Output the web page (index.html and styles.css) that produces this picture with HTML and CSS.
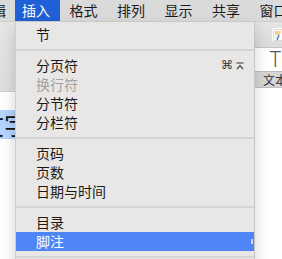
FILE: index.html
```html
<!DOCTYPE html>
<html lang="zh">
<head>
<meta charset="utf-8">
<link rel="stylesheet" href="styles.css">
</head>
<body>
<div class="screen">
  <div class="menubar">
    <div class="mb-item mb-first">编辑</div>
    <div class="mb-item mb-active">插入</div>
    <div class="mb-item">格式</div>
    <div class="mb-item">排列</div>
    <div class="mb-item">显示</div>
    <div class="mb-item">共享</div>
    <div class="mb-item">窗口</div>
  </div>
  <div class="window">
    <div class="doc">
      <div class="doc-toolbar"></div>
      <div class="doc-body">
        <span class="sel">插入文字</span>
      </div>
    </div>
    <div class="sidebar">
      <div class="sb-toolbar">
        <div class="sb-icon">
          <svg width="10" height="12" viewBox="0 0 10 12">
            <rect x="0.5" y="0.5" width="9" height="11" fill="#fff" stroke="#d8d8d8"/>
            <path d="M2 3h6M2 5h5" stroke="#f0a030" stroke-width="1.2"/>
            <path d="M6 6l-2 5" stroke="#3a7fe0" stroke-width="1.4"/>
            <path d="M2 8h2" stroke="#f6c040" stroke-width="1.2"/>
          </svg>
        </div>
      </div>
      <div class="sb-format">T</div>
      <div class="sb-tabs"><span class="sb-tab">文本</span></div>
      <div class="sb-body"></div>
    </div>
  </div>

  <div class="dropdown">
    <div class="mi">节</div>
    <div class="sep"></div>
    <div class="mi">分页符<span class="sc">⌘<svg class="enter" width="8" height="8" viewBox="0 0 8 8"><path d="M0.5 1h7M1 7.2L4 3.6L7 7.2" fill="none" stroke="#333" stroke-width="1.1"/></svg></span></div>
    <div class="mi mi-off">换行符</div>
    <div class="mi">分节符</div>
    <div class="mi">分栏符</div>
    <div class="sep"></div>
    <div class="mi">页码</div>
    <div class="mi">页数</div>
    <div class="mi">日期与时间</div>
    <div class="sep"></div>
    <div class="mi">目录</div>
    <div class="mi mi-hl">脚注<span class="arrow"></span></div>
    <div class="sep"></div>
    <div class="mi">批注</div>
  </div>
</div>
</body>
</html>
```
FILE: styles.css
```css
* { box-sizing: border-box; }
html, body { margin: 0; padding: 0; }
body {
  width: 282px;
  height: 259px;
  overflow: hidden;
  background: #fff;
  font-family: "Noto Sans CJK SC", "Noto Sans", sans-serif;
  color: #222;
}
.screen {
  position: relative;
  width: 282px;
  height: 259px;
  overflow: hidden;
}
.menubar {
  display: flex;
  gap: 2px;
  height: 22px;
  background: #dbdada;
  border-bottom: 1px solid #cfcfcf;
  font-size: 14px;
  line-height: 21px;
  white-space: nowrap;
}
.mb-item {
  padding: 0 10px 0 7.5px;
  color: #1a1a1a;
  flex: none;
}
.mb-first {
  margin-left: -22px;
  padding: 0 6.5px 0 0;
}
.mb-active {
  background: #1f60d6;
  color: #fff;
}
.window {
  display: flex;
  height: 237px;
}
.doc {
  flex: 1;
  display: flex;
  flex-direction: column;
}
.doc-toolbar {
  height: 70px;
  background: linear-gradient(#e6e6e6, #dedede);
  border-bottom: 1px solid #d0d0d0;
}
.doc-body {
  flex: 1;
  background: #fff;
  padding-top: 18px;
  padding-left: 0;
  font-size: 25px;
  line-height: 29px;
  overflow: hidden;
  white-space: nowrap;
}
.sel {
  display: inline-block;
  margin-left: -71px;
  background: #b4d5fe;
  color: #111;
}
.sidebar {
  width: 40px;
  display: flex;
  flex-direction: column;
  border-left: 1px solid #c8c8c8;
}
.sb-toolbar {
  height: 26px;
  background: linear-gradient(#e4e4e4, #dcdcdc);
  border-bottom: 1px solid #c4c4c4;
  display: flex;
  justify-content: flex-end;
  padding-top: 6px;
}
.sb-icon {
  width: 12px;
  height: 13px;
  background: #fff;
  margin-right: -2px;
  display: flex;
  align-items: center;
  justify-content: center;
}
.sb-format {
  height: 23px;
  background: #fff;
  text-align: right;
  padding-right: 1px;
  font-family: "Noto Sans", sans-serif;
  font-weight: 300;
  font-size: 21px;
  line-height: 23px;
  color: #555;
  overflow: hidden;
}
.sb-tabs {
  height: 17px;
  background: #d6d6d6;
  border-top: 1px solid #bdbdbd;
  border-bottom: 1px solid #bdbdbd;
  font-size: 12px;
  line-height: 15px;
  text-align: right;
  color: #333;
  white-space: nowrap;
  overflow: hidden;
}
.sb-tab { margin-right: -5px; }
.sb-body { flex: 1; background: #fff; }

.dropdown {
  position: absolute;
  left: 15px;
  top: 22px;
  width: 240px;
  padding-top: 3px;
  background: #e8e7e5;
  border-left: 1px solid #cfcfcf;
  border-right: 1px solid #c6c6c6;
  box-shadow: 0 6px 14px rgba(0, 0, 0, 0.18);
  font-size: 14px;
}
.mi {
  position: relative;
  height: 19px;
  line-height: 19px;
  padding-left: 20px;
  color: #1a1a1a;
  white-space: nowrap;
}
.mi-off { color: #a3a3a3; }
.mi-hl {
  background: #4f86f7;
  color: #fff;
}
.sc {
  position: absolute;
  right: 10px;
  top: 0;
  display: flex;
  align-items: center;
  gap: 3px;
  height: 19px;
  font-family: "DejaVu Sans", sans-serif;
  font-size: 12px;
  color: #333;
}
.arrow {
  position: absolute;
  right: 1px;
  top: 7px;
  width: 2px;
  height: 5px;
  background: #c8d8fb;
}
.sep {
  height: 2px;
  margin: 5px 0;
  background: #d6d5d3;
}
```
